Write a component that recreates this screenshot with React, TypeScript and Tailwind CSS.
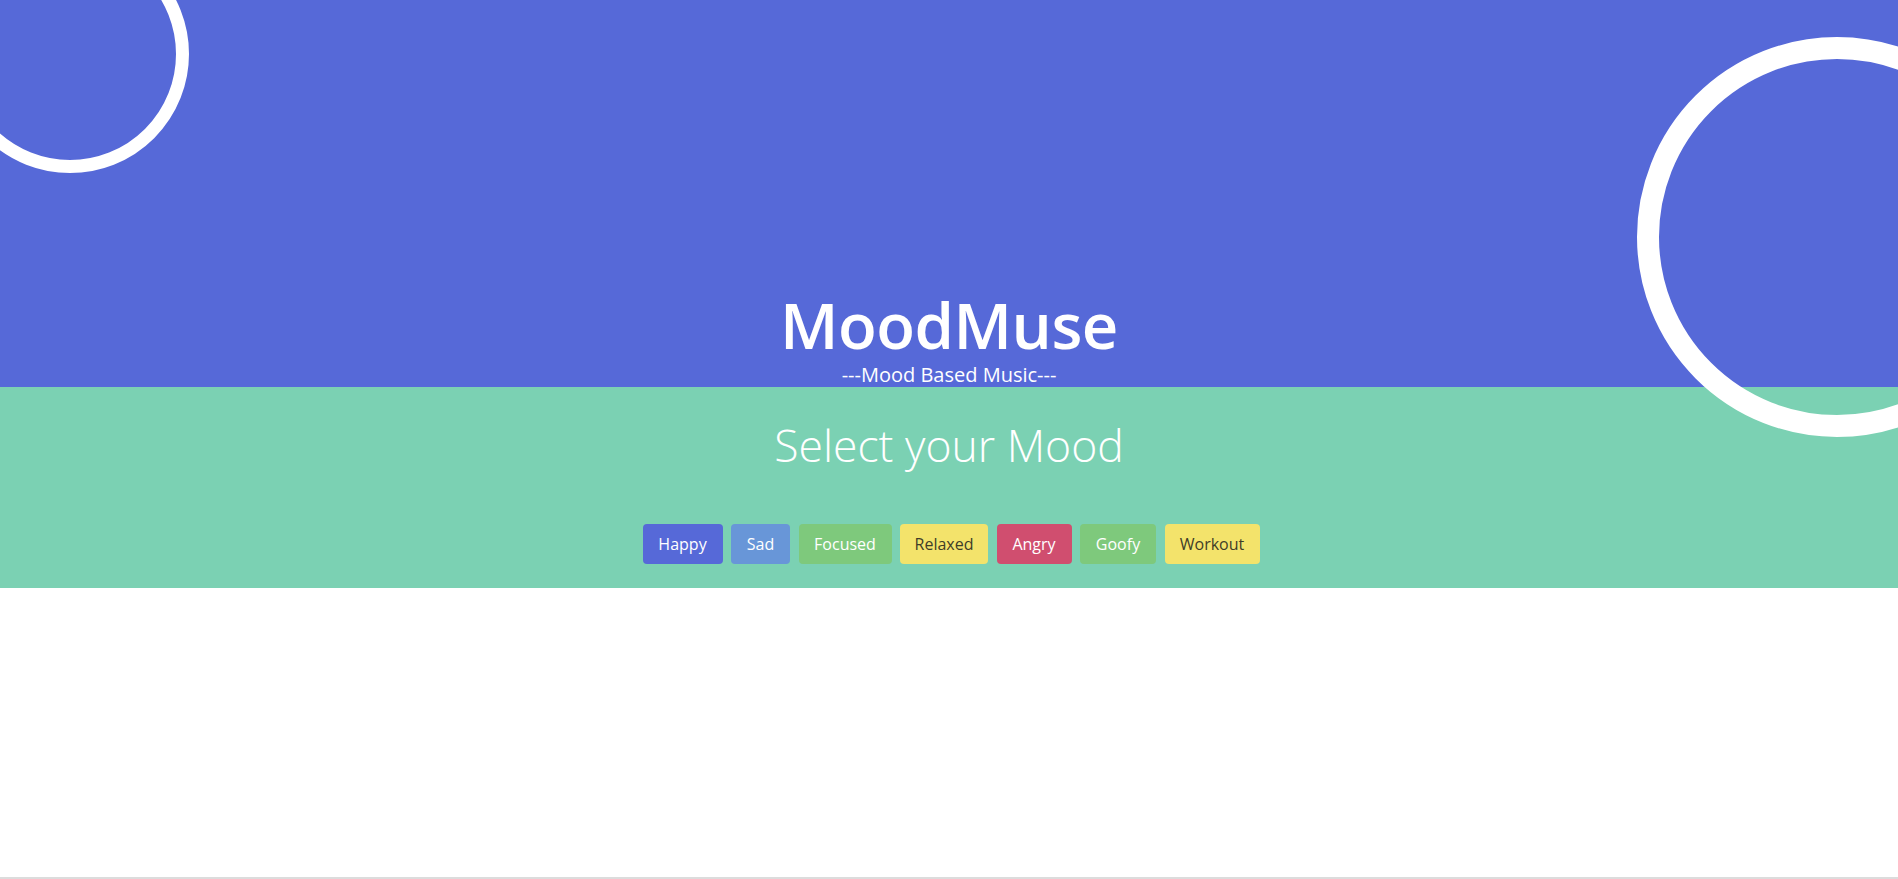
import React from "react";

const moods = [
  { label: "Happy", cls: "w-[80px] bg-[#5669d8] text-white" },
  { label: "Sad", cls: "w-[59px] bg-[#6896d8] text-white" },
  { label: "Focused", cls: "w-[93px] bg-[#7ec97c] text-white" },
  { label: "Relaxed", cls: "w-[88px] bg-[#f3e36b] text-[#3f3d28]" },
  { label: "Angry", cls: "w-[75px] bg-[#d04e6f] text-white" },
  { label: "Goofy", cls: "w-[76px] bg-[#7ec97c] text-white" },
  { label: "Workout", cls: "w-[95px] bg-[#f3e36b] text-[#3f3d28]" },
];

export default function App() {
  return (
    <div
      className="relative flex h-[879px] w-full flex-col overflow-hidden bg-white"
      style={{ fontFamily: '"Open Sans", "Noto Sans", sans-serif' }}
    >
      <header className="flex h-[387px] flex-col items-center justify-end bg-[#5669d8] text-white">
        <h1 className="text-[63.5px] font-semibold leading-[62px] tracking-[-0.5px]">MoodMuse</h1>
        <p className="mt-[7px] text-[20px] leading-[24px]">---Mood Based Music---</p>
      </header>

      <section className="flex h-[201px] flex-col items-center bg-[#7bd1b3]">
        <h2 className="mt-[35px] text-[44.5px] font-light leading-[46px] text-white">Select your Mood</h2>
        <div className="mt-[56px] flex gap-[8.5px] pl-[4px]">
          {moods.map((m) => (
            <button
              key={m.label}
              className={`flex h-[40px] items-center justify-center rounded-[4px] text-[16px] ${m.cls}`}
            >
              {m.label}
            </button>
          ))}
        </div>
      </section>

      <div className="flex-1 bg-white" />
      <div className="h-[2px] bg-[#dcdcdc]" />

      <div className="pointer-events-none absolute left-[-49px] top-[-65px] h-[238px] w-[238px] rounded-full border-[13px] border-white" />
      <div className="pointer-events-none absolute left-[1637px] top-[37px] h-[400px] w-[400px] rounded-full border-[22px] border-white" />
    </div>
  );
}
